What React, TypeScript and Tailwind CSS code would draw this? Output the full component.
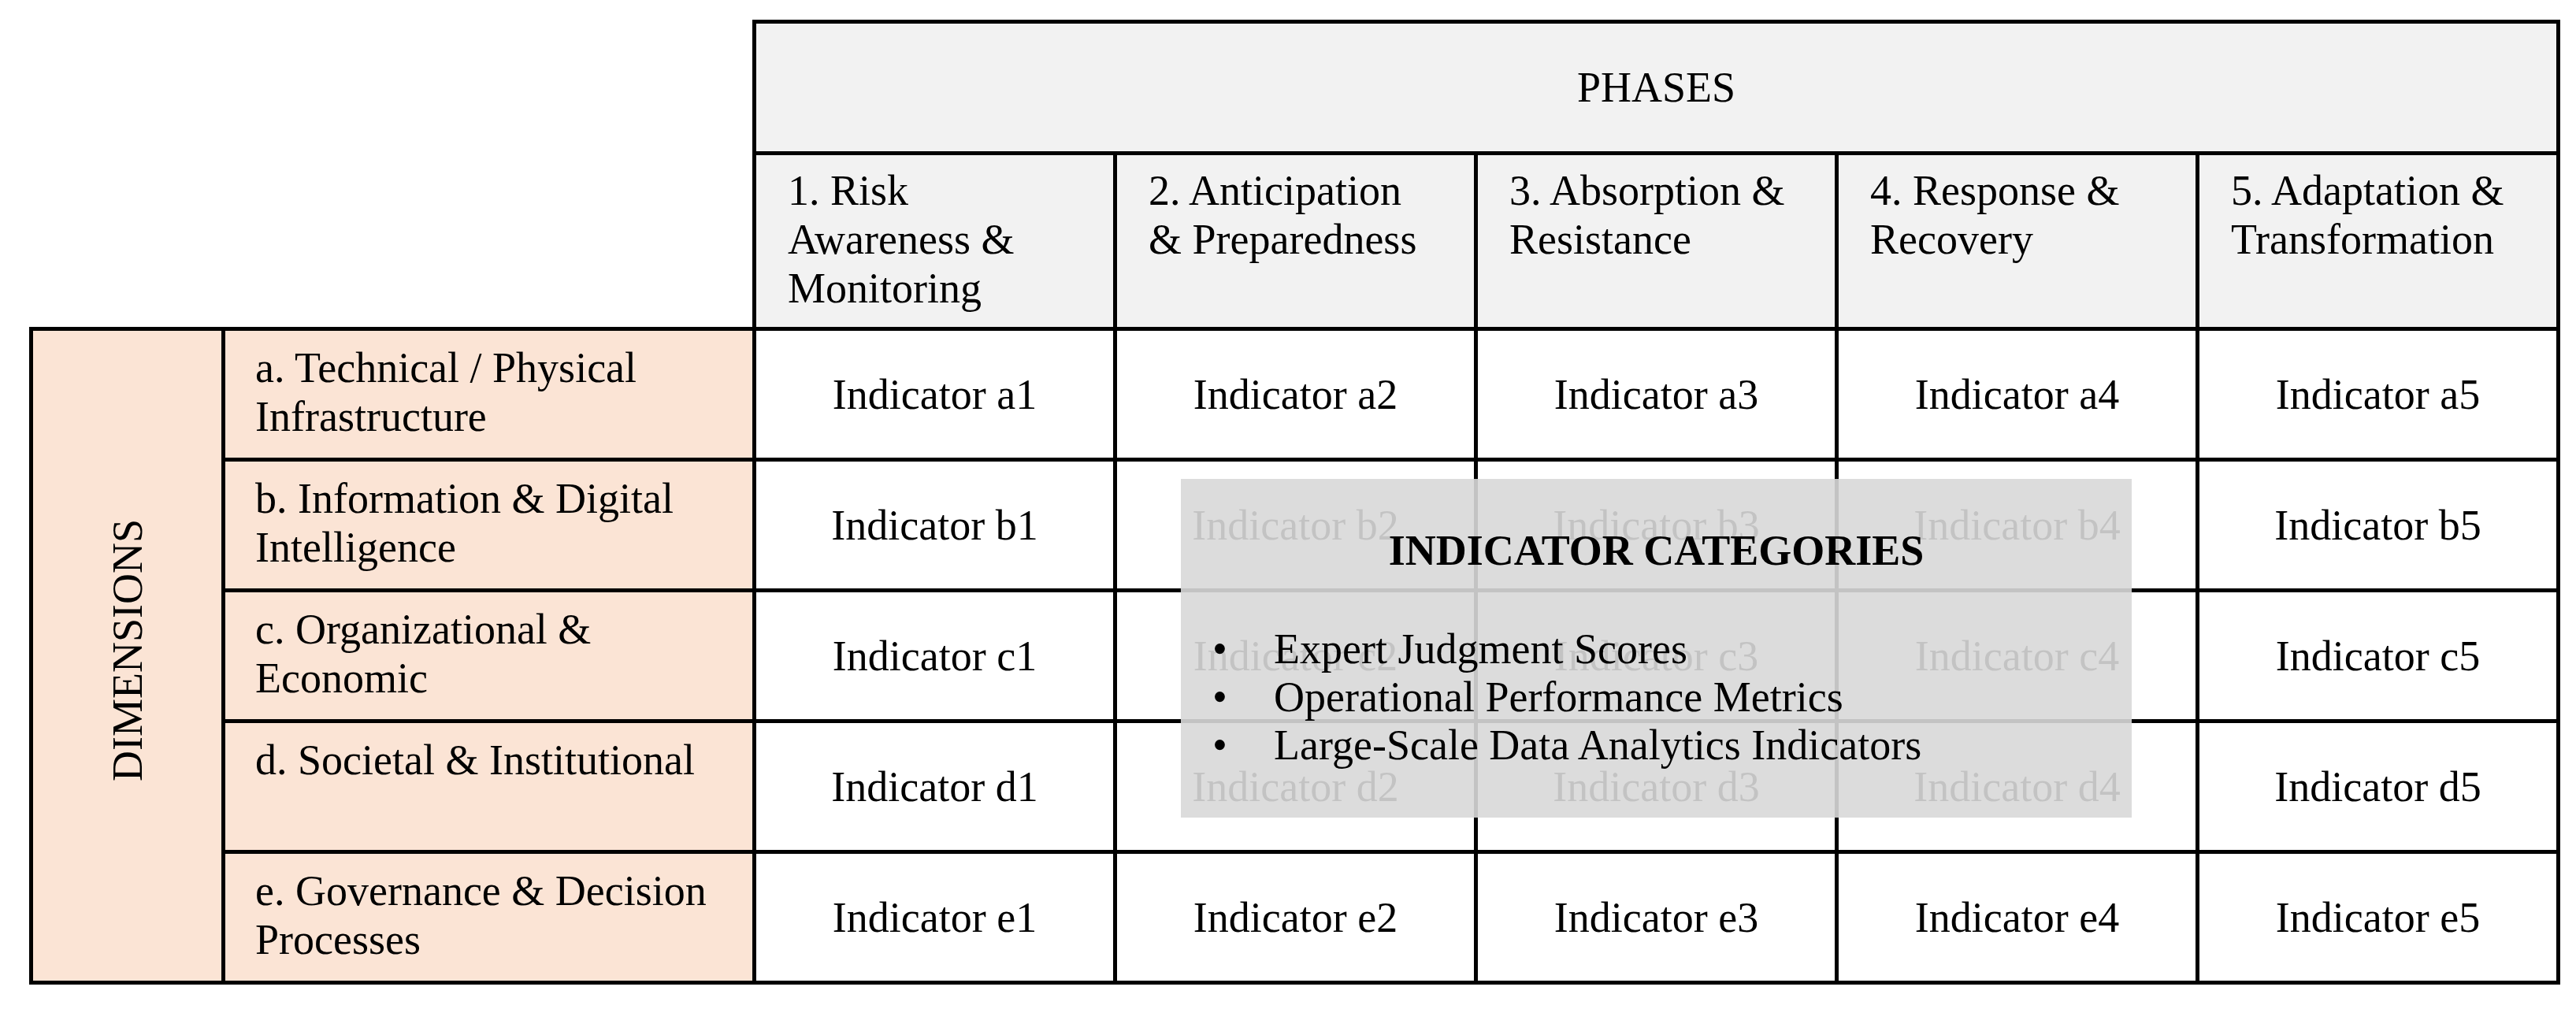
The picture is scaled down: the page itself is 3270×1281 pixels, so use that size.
import React from 'react';

const phases = [
  '1. Risk Awareness & Monitoring',
  '2. Anticipation & Preparedness',
  '3. Absorption & Resistance',
  '4. Response & Recovery',
  '5. Adaptation & Transformation',
];

const dimensions = [
  { key: 'a', label: 'a. Technical / Physical Infrastructure' },
  { key: 'b', label: 'b. Information & Digital Intelligence' },
  { key: 'c', label: 'c. Organizational & Economic' },
  { key: 'd', label: 'd. Societal & Institutional' },
  { key: 'e', label: 'e. Governance & Decision Processes' },
];

const categories = [
  'Expert Judgment Scores',
  'Operational Performance Metrics',
  'Large-Scale Data Analytics Indicators',
];

export default function App() {
  return (
    <div className="relative w-[3270px] h-[1281px] bg-white text-black font-['Liberation_Serif',serif] text-[54px] leading-[62px]">
      <div className="pl-[37px] pt-[25px]">
        <table className="table-fixed border-collapse w-[3210px]">
          <colgroup>
            <col className="w-[244px]" />
            <col className="w-[674px]" />
            <col className="w-[458px]" />
            <col className="w-[458px]" />
            <col className="w-[458px]" />
            <col className="w-[458px]" />
            <col className="w-[458px]" />
          </colgroup>
          <tbody>
            <tr>
              <td colSpan={2} rowSpan={2} className="p-0" />
              <td colSpan={5} className="h-[167px] border-[5px] border-black bg-[#f2f2f2] text-center align-middle">
                PHASES
              </td>
            </tr>
            <tr>
              {phases.map((p) => (
                <td
                  key={p}
                  className="h-[223px] border-[5px] border-black bg-[#f2f2f2] align-top pl-[40px] pr-[40px] pt-[14px]"
                >
                  {p}
                </td>
              ))}
            </tr>
            {dimensions.map((d, i) => (
              <tr key={d.key}>
                {i === 0 && (
                  <td rowSpan={5} className="border-[5px] border-black bg-[#fbe4d5] text-center align-middle">
                    <span className="inline-block [writing-mode:vertical-rl] rotate-180">DIMENSIONS</span>
                  </td>
                )}
                <td className="h-[166px] border-[5px] border-black bg-[#fbe4d5] align-top pl-[38px] pr-[30px] pt-[16px]">
                  {d.label}
                </td>
                {[1, 2, 3, 4, 5].map((n) => (
                  <td key={n} className="border-[5px] border-black text-center align-middle">
                    Indicator {d.key}
                    {n}
                  </td>
                ))}
              </tr>
            ))}
          </tbody>
        </table>
      </div>

      {/* overlay card */}
      <div className="absolute left-[1499px] top-[608px] w-[1207px] h-[430px] bg-[rgba(216,216,216,0.9)] pt-[59px]">
        <div className="text-center font-bold leading-[64px]">INDICATOR CATEGORIES</div>
        <ul className="mt-[63px] pl-[40px] leading-[61px]">
          {categories.map((c) => (
            <li key={c} className="flex">
              <span className="w-[78px]">•</span>
              <span>{c}</span>
            </li>
          ))}
        </ul>
      </div>
    </div>
  );
}
